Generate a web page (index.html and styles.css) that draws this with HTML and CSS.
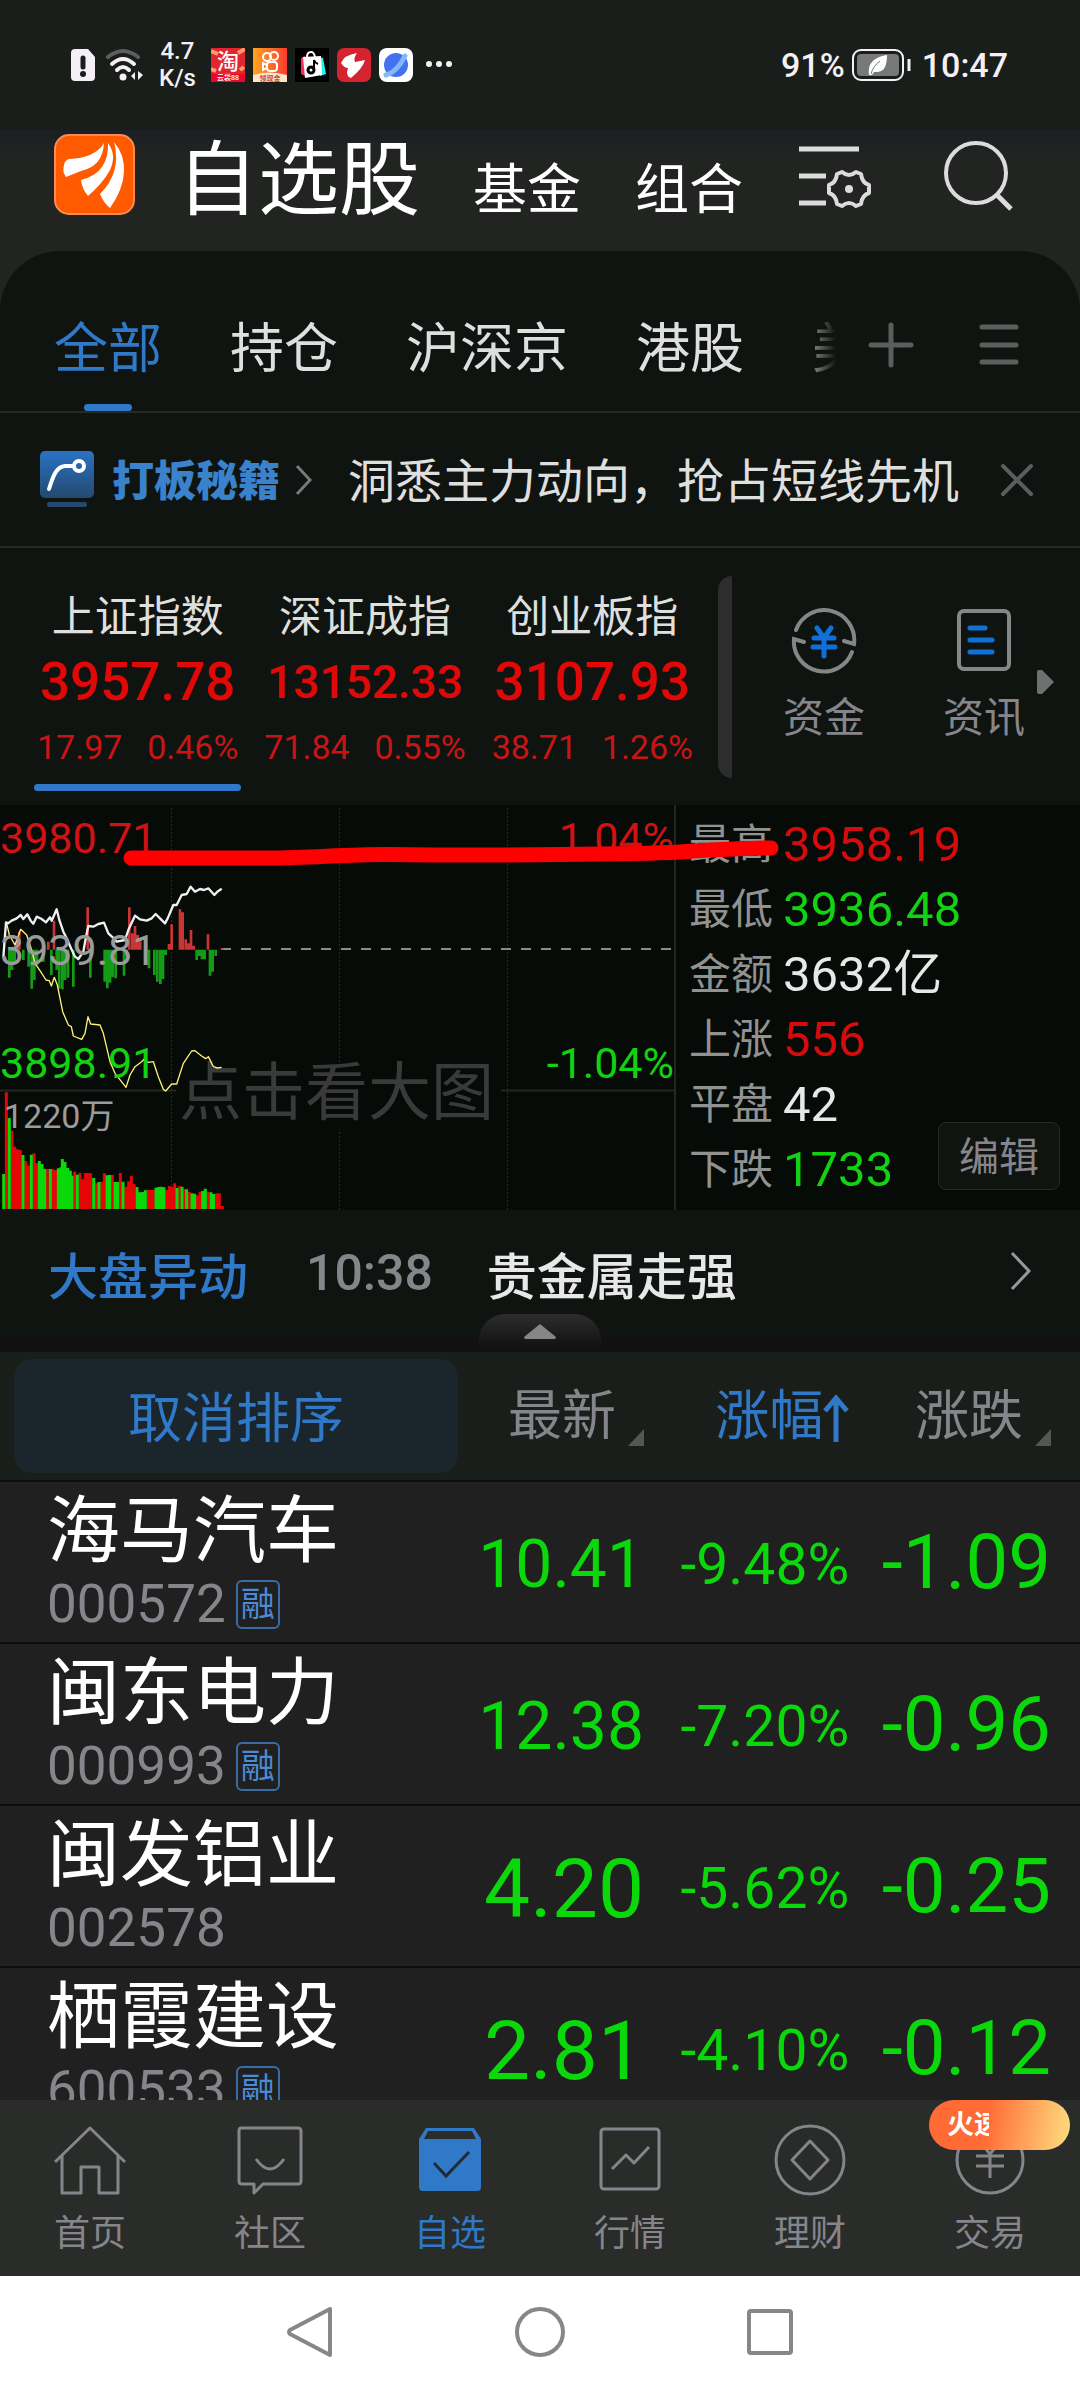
FILE: index.html
```html
<!DOCTYPE html>
<html lang="zh-CN">
<head>
<meta charset="utf-8">
<meta name="viewport" content="width=device-width, initial-scale=1">
<title>自选股</title>
<link rel="stylesheet" href="styles.css">
</head>
<body>
<div class="app">
  <div class="status">
    <svg class="status-sim" width="26" height="34" viewBox="0 0 26 34"><path d="M5 1h13l7 8v20a4 4 0 0 1-4 4H5a4 4 0 0 1-4-4V5a4 4 0 0 1 4-4z" fill="#f4f0f5"/><path d="M13 10v9" stroke="#1a1e1b" stroke-width="5" stroke-linecap="round"/><circle cx="13" cy="26" r="3" fill="#1a1e1b"/></svg>
    <svg class="status-wifi" width="38" height="34" viewBox="0 0 38 34" fill="none" stroke-width="4" stroke-linecap="round"><path d="M3 9q15-12 30 0" stroke="#5c5e5c"/><path d="M7 16q11-10 22 0M12 22q6-6 12 0" stroke="#f4f0f5"/><circle cx="18" cy="29" r="3.500" fill="#f4f0f5"/><path d="M26 28l4-4v8zM38 27l-5-4v9z" fill="#f4f0f5"/></svg>
    <div class="status-speed"><span>4.7</span><span>K/s</span></div>
    <div class="status-apps">
      <svg width="34" height="34" viewBox="0 0 34 34"><rect width="34" height="34" fill="#e2262f"/><path d="M0 3l7 3M27 5l7-4M0 21l5 2M29 22l4-3" stroke="#ff9c6a" stroke-width="4"/><rect y="26" width="34" height="8" fill="#e8082c"/><text x="17" y="21" font-size="22" text-anchor="middle" fill="#fff">淘</text><text x="17" y="32" font-size="7" text-anchor="middle" fill="#fff">云袋88</text></svg>
      <svg width="34" height="34" viewBox="0 0 34 34"><defs><linearGradient id="ks" x1="0" x2="1"><stop stop-color="#ffa51f"/><stop offset="1" stop-color="#fb3b2e"/></linearGradient></defs><rect width="34" height="34" fill="url(#ks)"/><path d="M0 27q17-5 34 0v7H0z" fill="#ffe6c4"/><g fill="none" stroke="#fff" stroke-width="2"><circle cx="14" cy="9" r="4"/><circle cx="21" cy="8" r="4"/><rect x="14" y="14" width="10" height="9" rx="3"/><path d="M14 17l-4-2v7l4-2"/></g><text x="17" y="33" font-size="7" text-anchor="middle" fill="#b5261c">领现金</text></svg>
      <svg width="34" height="34" viewBox="0 0 34 34"><rect width="34" height="34" fill="#000"/><path d="M6 10l4-2v20l-4-2z" fill="#fe2c55"/><path d="M24 9l4 1 3 16-6 2z" fill="#25f4ee"/><path d="M12 9q0-5 4-5 3 0 4 5" fill="none" stroke="#fff" stroke-width="2"/><path d="M8 9l18-1 1 19-17 3z" fill="#fff"/><circle cx="16" cy="22" r="3" fill="none" stroke="#000" stroke-width="3"/><path d="M19 22V12q1 3 4 4" fill="none" stroke="#000" stroke-width="2"/></svg>
      <svg width="34" height="34" viewBox="0 0 34 34"><rect width="34" height="34" rx="7" fill="#d5232f"/><path d="M20 5q-4 6-2 9l10-2q-2 8-14 18-4-1-4-6l1-4q-4 0-7-5 3-8 16-10z" fill="#fff"/></svg>
      <svg width="34" height="34" viewBox="0 0 34 34"><rect width="34" height="34" rx="8" fill="#fff"/><circle cx="17" cy="17" r="12" fill="#4671ee"/><path d="M7 27q11-3 19-19" fill="none" stroke="#82b9fb" stroke-width="5" stroke-linecap="round"/></svg>
      <svg class="status-dots" width="28" height="34" viewBox="0 0 28 34" fill="#f4f0f5"><circle cx="8" cy="16" r="3"/><circle cx="18" cy="16" r="3"/><circle cx="28" cy="16" r="3"/></svg>
    </div>
    <span class="status-pct">91%</span>
    <svg class="status-bat" width="62" height="34" viewBox="0 0 62 34"><rect x="2" y="2" width="50" height="30" rx="8" fill="none" stroke="#f4f0f5" stroke-width="2"/><rect x="6" y="6" width="42" height="22" rx="4" fill="#777a78"/><path d="M18 27c-1-10 2-17 18-20 0 12-3 18-13 17l-2 3z" fill="#fff"/><path d="M20 26q2-8 9-13" stroke="#777a78" stroke-width="1" fill="none"/><path d="M58 11v12" stroke="#f4f0f5" stroke-width="3"/></svg>
    <time class="status-time">10:47</time>
  </div>

  <header class="header">
    <svg class="logo" width="81" height="81" viewBox="0 0 81 81"><rect x="1" y="1" width="79" height="79" rx="14" fill="#ff5a00" stroke="#ff8a50" stroke-width="2"/><path d="M10 31q1-5 5-6 26-1 35-16-1 23-23 28l-15 6q-4-5-2-12z" fill="#fff"/><path d="M54 9q9 12 2 27-7 13-22 26-6-7-7-16 28-7 27-37z" fill="#fff"/><path d="M60 8q11 13 10 30-1 18-14 36-7-6-10-14 22-22 14-52z" fill="#fff"/></svg>
    <h1 class="title">自选股</h1>
    <a class="subtitle" href="#">基金</a>
    <a class="subtitle" href="#">组合</a>
    <button class="icon-btn filter-btn" aria-label="筛选设置"><svg width="74" height="66" viewBox="0 0 74 66" fill="none" stroke="#dcdcdc" stroke-width="5"><path d="M2 4h60M2 31h27M2 58h27"/><path d="M45 27q7 6 14 0l5 2q1 9 8 11v8q-7 2-8 11l-5 2q-7-6-14 0l-5-2q-1-9-8-11v-8q7-2 8-11z" stroke-width="4" stroke-linejoin="round"/><circle cx="52" cy="44" r="4" fill="#dcdcdc" stroke="none"/></svg></button>
    <button class="icon-btn search-btn" aria-label="搜索"><svg width="72" height="70" viewBox="0 0 72 70" fill="none" stroke="#dcdcdc" stroke-width="4"><circle cx="34" cy="32" r="30"/><path d="M55 54l14 14" stroke-width="5"/></svg></button>
  </header>

  <main class="panel">
    <nav class="tabs">
      <div class="tabs-list">
        <a class="tab tab-active" href="#">全部</a>
        <a class="tab" href="#">持仓</a>
        <a class="tab" href="#">沪深京</a>
        <a class="tab" href="#">港股</a>
        <a class="tab" href="#">美股</a>
      </div>
      <button class="icon-btn" aria-label="添加分组"><svg width="46" height="46" viewBox="0 0 46 46" stroke="#5c5e5d" stroke-width="5" stroke-linecap="round"><path d="M3 23h40M23 3v40"/></svg></button>
      <button class="icon-btn" aria-label="管理分组"><svg width="42" height="46" viewBox="0 0 42 46" stroke="#5c5e5d" stroke-width="5" stroke-linecap="round"><path d="M4 5h34M4 23h34M4 40h34"/></svg></button>
    </nav>

    <section class="promo">
      <svg width="54" height="58" viewBox="0 0 54 58"><defs><linearGradient id="pg" x1="0" x2="0" y1="0" y2="1"><stop stop-color="#2b72c4"/><stop offset="1" stop-color="#24496f"/></linearGradient></defs><rect width="54" height="47" rx="5" fill="url(#pg)"/><path d="M9 38c5-16 8-22 16-23h9" fill="none" stroke="#fff" stroke-width="4" stroke-linecap="round"/><circle cx="39" cy="15" r="5" fill="none" stroke="#fff" stroke-width="4"/><rect x="7" y="51" width="40" height="5" rx="2" fill="#24496f"/></svg>
      <a class="promo-name" href="#">打板秘籍</a>
      <svg width="20" height="32" viewBox="0 0 20 32" fill="none" stroke="#77797a" stroke-width="3"><path d="M3 2l13 14L3 30"/></svg>
      <span class="promo-text">洞悉主力动向，抢占短线先机</span>
      <button class="icon-btn promo-close" aria-label="关闭"><svg width="34" height="34" viewBox="0 0 34 34" stroke="#5c5e5d" stroke-width="4" stroke-linecap="round"><path d="M3 3l28 28M31 3L3 31"/></svg></button>
    </section>

    <section class="indices">
      <div class="index-list">
        <a class="index index-active" href="#"><span class="index-name">上证指数</span><span class="index-value">3957.78</span><span class="index-delta"><span>17.97</span><span>0.46%</span></span></a>
        <a class="index" href="#"><span class="index-name">深证成指</span><span class="index-value index-value-long">13152.33</span><span class="index-delta"><span>71.84</span><span>0.55%</span></span></a>
        <a class="index" href="#"><span class="index-name">创业板指</span><span class="index-value">3107.93</span><span class="index-delta"><span>38.71</span><span>1.26%</span></span></a>
      </div>
      <div class="index-divider"></div>
      <div class="shortcuts">
        <a class="shortcut" href="#"><svg width="66" height="68" viewBox="0 0 66 68" fill="none"><g stroke="#868686" stroke-width="4" stroke-linecap="round"><path d="M5 24A30 30 0 0 1 63 38l-10-3M61 46A30 30 0 0 1 3 33l10 3"/></g><path d="M26 22l7 10 7-10M23 32h20M22 41h22M33 32v18" stroke="#1070d8" stroke-width="5" stroke-linecap="round"/></svg>资金</a>
        <a class="shortcut" href="#"><svg width="54" height="68" viewBox="0 0 54 68" fill="none"><rect x="2" y="5" width="50" height="58" rx="5" stroke="#868686" stroke-width="4"/><path d="M13 22h15M13 34h22M13 46h22" stroke="#1070d8" stroke-width="5" stroke-linecap="round"/></svg>资讯</a>
      </div>
      <svg class="more-arrow" width="17" height="26" viewBox="0 0 17 26"><path d="M2 1h3l12 12L5 25H2q-2 0-2-2V3q0-2 2-2z" fill="#6f706f"/></svg>
    </section>

    <section class="quote">
      <svg class="chart" viewBox="0 0 674 405" role="img" aria-label="上证指数分时图">
        <g stroke="#262a27" stroke-width="1" stroke-dasharray="2 2"><path d="M171.500 3v402M339.500 3v402M507.500 3v402"/></g>
        <path d="M0 285.500h176M501 285.500h173" stroke="#232624" stroke-width="2"/>
        <path d="M221 144h453" stroke="#8c8c8c" stroke-width="2" stroke-dasharray="10 10"/>
        <rect x="176" y="258" width="325" height="66" fill="#060b07"/>
        <text class="chart-hint" x="179" y="309">点击看大图</text>
        <svg width="674" height="405" viewBox="0 -225 2022 1215" fill="none">
          <path stroke="#c93434" stroke-width="8" d="M50 209v-24M58 209v-54M145 209v-24M162 209v-87M263 209V82M388 209V82M397 209v-49M405 209v-71M413 209v-44M421 209v-30M507 209v-17M515 209v-76M540 209V88M548 209V97M557 209v-31M565 209v-19M573 209v-59M581 209v-12M624 209v-46M666 209v-4"/>
          <path stroke="#159c17" stroke-width="8" d="M28 209v84M36 209v61M44 209v41M70 209v31M86 209v51M95 209v117M103 209v91M111 209v46M130 209v36M154 209v76M170 209v61M178 209v117M187 209v119M195 209v91M204 209v84M220 209v111M271 209v84M314 209v96M322 209v116M330 209v99M338 209v83M347 209v86M372 209v78M380 209v20M447 209v56M463 209v76M472 209v96M481 209v103M489 209v88M497 209v16M590 209v31M598 209v19M606 209v29M614 209v29M630 209v78M638 209v66M647 209v19"/>
          <path stroke="#fff07a" stroke-width="4" stroke-linejoin="round" d="M20 130L28 165 45 195 62 148 80 165 95 210 105 250 120 272 138 300 148 302 154 318 163 292 172 315 188 395 205 435 214 440 220 468 245 478 255 460 264 410 272 432 300 435 310 460 330 545 345 580 378 622 390 585 405 560 425 545 432 538 445 547 460 545 475 590 490 628 497 633 515 612 530 612 550 550 575 513 585 512 605 528 617 536 625 530 640 560 652 564 665 562"/>
          <path stroke="#f0f0f0" stroke-width="7" stroke-linejoin="round" d="M10 232L18 127 24 130 35 122 50 115 62 105 70 117 82 103 92 122 100 131 110 110 125 117 138 127 150 112 155 122 170 88 178 120 190 155 200 175 213 205 225 230 235 237 250 215 258 170 265 138 280 140 295 132 312 128 325 160 338 172 350 185 375 180 385 150 405 107 420 118 440 122 455 115 467 102 480 115 495 130 503 115 520 75 530 75 545 45 560 42 572 20 585 35 600 27 612 30 625 25 643 45 652 35 665 26"/>
          <path stroke="#e60505" stroke-width="9" d="M19 987V637M36 987V752M44 987V800M52 987V808M61 987V810M77 987V843M85 987V857M102 987V820M110 987V850M142 987V867M159 987V868M167 987V870M224 987V875M240 987V879M248 987V897M256 987V879M264 987V879M272 987V880M289 987V910M305 987V905M313 987V880M337 987V885M361 987V879M377 987V920M386 987V904M394 987V887M402 987V912M444 987V929M452 987V930M460 987V929M500 987V930M508 987V918M516 987V920M524 987V910M538 987V918M554 987V927M568 987V936M592 987V946M600 987V935M624 987V935M650 987V940M658 987V940M667 987V978"/>
          <path stroke="#0ad80a" stroke-width="9" d="M11 987V882M28 987V714M69 987V825M94 987V824M118 987V843M126 987V852M134 987V867M151 987V867M175 987V865M183 987V862M187 987V837M195 987V846M203 987V864M211 987V872M216 987V887M232 987V884M281 987V894M297 987V906M321 987V886M329 987V885M345 987V906M353 987V906M369 987V905M411 987V921M419 987V937M427 987V936M436 987V931M468 987V923M476 987V921M484 987V920M492 987V922M531 987V924M546 987V920M560 987V928M576 987V940M584 987V941M608 987V933M616 987V926M633 987V937M641 987V942"/>
        </svg>
        <text class="axis axis-up" x="0" y="48">3980.71</text>
        <text class="axis axis-mid" x="0" y="160">3939.81</text>
        <text class="axis axis-down" x="0" y="273">3898.91</text>
        <text class="axis axis-up" x="674" y="48" text-anchor="end">1.04%</text>
        <text class="axis axis-down" x="674" y="273" text-anchor="end">-1.04%</text>
        <text class="axis-vol" x="4" y="323">1220万</text>
      </svg>
      <dl class="stats">
        <dt>最高</dt><dd class="up">3958.19</dd>
        <dt>最低</dt><dd class="down">3936.48</dd>
        <dt>金额</dt><dd>3632亿</dd>
        <dt>上涨</dt><dd class="up">556</dd>
        <dt>平盘</dt><dd>42</dd>
        <dt>下跌</dt><dd class="down">1733</dd>
      </dl>
      <button class="edit">编辑</button>
      <svg class="marker" viewBox="0 0 1080 405" fill="none" stroke="#f00" stroke-width="15" stroke-linecap="round" stroke-linejoin="round"><path d="M131 53H270C310 53 350 49 390 49.500C500 51 640 49 680 47C710 45 740 43 771 43"/></svg>
    </section>

    <section class="news">
      <a class="news-tag" href="#">大盘异动</a>
      <time class="news-time">10:38</time>
      <span class="news-text">贵金属走强</span>
      <svg class="news-chev" width="22" height="40" viewBox="0 0 22 40" fill="none" stroke="#97979c" stroke-width="3"><path d="M2 2l17 18L2 38"/></svg>
      <button class="collapse" aria-label="收起"><svg width="32" height="15" viewBox="0 0 32 15"><path d="M16 0l16 13-1 2H1l-1-2z" fill="#858685"/></svg></button>
    </section>

    <section class="list">
      <table class="stocks">
        <colgroup><col class="c-name"><col class="c-price"><col class="c-pct"><col class="c-diff"></colgroup>
        <thead>
          <tr>
            <th><button class="cancel-sort">取消排序</button></th>
            <th><button class="sort">最新<svg width="16" height="17" viewBox="0 0 16 17"><path d="M16 0v17H0z" fill="#555755"/></svg></button></th>
            <th><button class="sort sort-active">涨幅<svg class="sort-arrow" width="26" height="48" viewBox="0 0 26 48"><path d="M13 4v44M2 17L13 4l11 13" fill="none" stroke="#3078c8" stroke-width="5"/></svg></button></th>
            <th><button class="sort">涨跌<svg width="16" height="17" viewBox="0 0 16 17"><path d="M16 0v17H0z" fill="#555755"/></svg></button></th>
          </tr>
        </thead>
        <tbody>
          <tr><td><span class="name">海马汽车</span><span class="code">000572<i class="margin">融</i></span></td><td class="price price-long">10.41</td><td class="pct">-9.48%</td><td class="diff">-1.09</td></tr>
          <tr><td><span class="name">闽东电力</span><span class="code">000993<i class="margin">融</i></span></td><td class="price price-long">12.38</td><td class="pct">-7.20%</td><td class="diff">-0.96</td></tr>
          <tr><td><span class="name">闽发铝业</span><span class="code">002578</span></td><td class="price">4.20</td><td class="pct">-5.62%</td><td class="diff">-0.25</td></tr>
          <tr><td><span class="name">栖霞建设</span><span class="code">600533<i class="margin">融</i></span></td><td class="price">2.81</td><td class="pct">-4.10%</td><td class="diff">-0.12</td></tr>
        </tbody>
      </table>
    </section>
  </main>

  <nav class="tabbar">
    <a href="#"><svg width="72" height="76" viewBox="0 0 72 76" fill="none" stroke="#85858b" stroke-width="3"><path d="M1 40L36 6l35 34M8 34v37h19V45h18v26h19V34" stroke-linejoin="round"/></svg>首页</a>
    <a href="#"><svg width="72" height="76" viewBox="0 0 72 76" fill="none" stroke="#85858b" stroke-width="3" stroke-linejoin="round"><path d="M7 6h57q3 0 3 3v50q0 3-3 3H29L20 71v-9H8q-3 0-3-3V9q0-3 2-3z"/><path d="M22 37q14 20 28 0"/></svg>社区</a>
    <a class="tabbar-active" href="#"><svg width="72" height="76" viewBox="0 0 72 76"><path d="M12 6h48l7 11v48q0 4-4 4H9q-4 0-4-4V17z" fill="#3078c8"/><path d="M14 9h44l4 8H10z" fill="#292c29"/><path d="M20 41l12 13 23-24" fill="none" stroke="#222b33" stroke-width="3"/></svg>自选</a>
    <a href="#"><svg width="72" height="76" viewBox="0 0 72 76" fill="none" stroke="#85858b" stroke-width="3" stroke-linejoin="round"><rect x="7" y="7" width="58" height="60" rx="3"/><path d="M18 47l14-14 8 8 15-16"/></svg>行情</a>
    <a href="#"><svg width="72" height="76" viewBox="0 0 72 76" fill="none" stroke="#85858b" stroke-width="3" stroke-linejoin="round"><circle cx="36" cy="38" r="34"/><path d="M36 19l18 19-18 19-18-19z"/></svg>理财</a>
    <a href="#"><svg width="72" height="76" viewBox="0 0 72 76" fill="none" stroke="#85858b" stroke-width="3"><circle cx="36" cy="38" r="33"/><path d="M26 20l10 12 10-12M22 34h28M22 44h28M36 32v24"/></svg>交易<span class="hot"><span>火速</span></span></a>
  </nav>

  <div class="sysnav">
    <button class="icon-btn" aria-label="返回"><svg width="46" height="50" viewBox="0 0 46 50" fill="none" stroke="#868886" stroke-width="4" stroke-linejoin="round"><path d="M43 2v46L3 27q-2-2 0-4z"/></svg></button>
    <button class="icon-btn" aria-label="主屏幕"><svg width="50" height="50" viewBox="0 0 50 50" fill="none" stroke="#868886" stroke-width="4"><circle cx="25" cy="25" r="23"/></svg></button>
    <button class="icon-btn" aria-label="最近任务"><svg width="46" height="50" viewBox="0 0 46 50" fill="none" stroke="#868886" stroke-width="4"><rect x="2" y="4" width="42" height="42" rx="2"/></svg></button>
  </div>
</div>
</body>
</html>
```
FILE: styles.css
```css
* { box-sizing: border-box; }
body {
  margin: 0;
  background: #1a1e1b;
  color: #dfdfdf;
  font-family: Roboto, "Noto Sans CJK SC", sans-serif;
}
svg { display: block; flex: none; }
a { color: inherit; text-decoration: none; }
button {
  padding: 0;
  border: 0;
  background: none;
  color: inherit;
  font: inherit;
  cursor: pointer;
}
.up { color: #d60b0b; }
.down { color: #12d212; }

.app {
  display: flex;
  flex-direction: column;
  height: 100vh;
  overflow: hidden;
}

/* System status bar */
.status {
  display: flex;
  align-items: center;
  height: 130px;
  padding: 0 72px 0 70px;
  color: #f4f0f5;
  font-weight: 500;
  font-size: 34px;
}
.status-wifi { margin-left: 9px; }
.status-speed {
  display: flex;
  flex-direction: column;
  align-items: center;
  margin-left: 16px;
  font-size: 24px;
  line-height: 27px;
}
.status-apps {
  display: flex;
  gap: 8px;
  margin: 0 auto 0 15px;
}
.status-dots { overflow: visible; }
.status-bat { margin: 0 9px 0 6px; }

/* App header */
.header {
  display: flex;
  align-items: flex-end;
  height: 121px;
  padding: 0 66px 30px 54px;
  background: linear-gradient(#1c1f24, #212421 24px);
  color: #fff;
  line-height: 60px;
}
.logo { margin-bottom: 6px; }
.title {
  margin: 0 53px 0 42px;
  font-weight: 400;
  font-size: 81px;
  line-height: 81px;
}
.subtitle { margin-right: 54px; font-size: 54px; }
.filter-btn { margin: 0 auto 10px 0; }
.search-btn { margin-bottom: 10px; }

.panel {
  display: flex;
  flex: 1;
  flex-direction: column;
  min-height: 0;
  background: linear-gradient(#212421 80px, #0f1410 80px);
}

/* Group tabs */
.tabs {
  display: flex;
  align-items: center;
  gap: 64px;
  height: 162px;
  padding-right: 60px;
  border-bottom: 2px solid #262a27;
  border-radius: 60px 60px 0 0;
  background: #0f1410;
}
.tabs-list {
  display: flex;
  flex: 1;
  gap: 68px;
  height: 100%;
  margin-right: -32px;
  padding-left: 54px;
  overflow: hidden;
  font-size: 54px;
  line-height: 198px;
  white-space: nowrap;
  mask-image: linear-gradient(90deg, #000 95%, transparent);
}
.tab { flex: none; }
.tab-active {
  display: flex;
  flex-direction: column;
  align-items: center;
  color: #3078c8;
}
.tab-active::after {
  width: 48px;
  height: 8px;
  margin-top: -45px;
  border-radius: 4px;
  background: #3078c8;
  content: "";
}
.tabs .icon-btn { margin-top: 28px; }

/* Promotion */
.promo {
  display: flex;
  align-items: center;
  height: 135px;
  padding: 0 46px 0 40px;
  border-bottom: 2px solid #262a27;
}
.promo-name, .promo-text { padding-bottom: 4px; }
.promo-name {
  margin: 0 14px 0 18px;
  color: #3a82cc;
  font-weight: 900;
  font-size: 42px;
}
.promo-text { margin-left: 34px; font-size: 47px; }
.promo-close { margin-left: auto; }

/* Indices */
.indices {
  display: flex;
  align-items: center;
  height: 257px;
  padding: 0 26px 0 24px;
}
.index-list { display: flex; flex: 682; align-self: stretch; }
.index {
  display: flex;
  flex: 1;
  flex-direction: column;
  align-items: center;
  padding: 42px 10px 0;
  color: #e10808;
}
.index-name { color: #dfdfdf; font-size: 43px; line-height: 54px; }
.index-value { font-weight: 500; font-size: 53px; line-height: 76px; }
.index-value-long { font-size: 46px; }
.index-delta {
  display: flex;
  align-self: stretch;
  justify-content: space-between;
  padding: 0 3px;
  color: #c81414;
  font-size: 34px;
  line-height: 54px;
}
.index-active::after {
  align-self: stretch;
  height: 7px;
  margin-top: 10px;
  border-radius: 4px;
  background: #3078c8;
  content: "";
}
.index-divider {
  width: 14px;
  height: 202px;
  margin: 0 12px;
  border-radius: 14px 0 0 14px;
  background: #2c2d2c;
}
.shortcuts { display: flex; flex: 320; }
.shortcut {
  display: flex;
  flex: 1;
  flex-direction: column;
  align-items: center;
  gap: 14px;
  color: #85858b;
  font-size: 41px;
  line-height: 60px;
}
.more-arrow { margin: 10px 0 0 -27px; }

/* Intraday chart and figures */
.quote {
  display: grid;
  position: relative;
  grid-template-columns: 674fr 406fr;
  background: #060b07;
}
.chart { width: 100%; }
.chart-hint { fill: #3a3a3a; font-size: 63px; }
.axis { font-size: 43px; }
.axis-up { fill: #d01212; }
.axis-mid { fill: #9b9b9b; }
.axis-down { fill: #12d212; }
.axis-vol { fill: #9b9b9b; font-size: 34px; }
.stats {
  display: grid;
  grid-template-columns: auto 1fr;
  grid-auto-rows: 65px;
  column-gap: 10px;
  align-content: start;
  margin: 0;
  padding: 7px 0 0 13px;
  border-left: 2px solid #232624;
  line-height: 65px;
}
.stats dt { color: #929292; font-size: 42px; }
.stats dd { margin: 0; font-size: 49px; }
.stats dd:not([class]) { color: #e8e8e8; }
.edit {
  position: absolute;
  right: 20px;
  bottom: 20px;
  width: 122px;
  height: 68px;
  padding-top: 4px;
  border: 1px solid #262a27;
  border-radius: 8px;
  background: #0f1410;
  color: #85858b;
  font-size: 40px;
  line-height: 60px;
}
.marker {
  position: absolute;
  inset: 0;
  width: 100%;
  pointer-events: none;
}

/* Market news */
.news {
  display: flex;
  position: relative;
  align-items: center;
  height: 142px;
  padding: 0 48px 2px;
  border-bottom: 14px solid #101110;
  font-weight: 500;
  font-size: 50px;
}
.news-tag { color: #3078c8; }
.news-time { margin: 0 54px 0 58px; color: #85858b; }
.news-text { color: #e8e8e8; }
.news-chev { margin: 0 0 4px auto; }
.collapse {
  display: flex;
  position: absolute;
  bottom: -10px;
  left: 50%;
  align-items: center;
  justify-content: center;
  width: 122px;
  height: 34px;
  margin-left: -61px;
  border-radius: 26px 26px 0 0;
  background: linear-gradient(#2c2d2c, #101110);
}

/* Stock table */
.list { flex: 1; min-height: 0; overflow: hidden; background: #202020; }
.stocks {
  width: 100%;
  border-collapse: collapse;
  table-layout: fixed;
}
.c-name { width: 43%; }
.c-price { width: 17%; }
.c-pct { width: 19%; }
.c-diff { width: 21%; }
.stocks th, .stocks td { padding: 0 4px 0 0; text-align: right; font-weight: 400; }
.stocks th {
  height: 129px;
  border-bottom: 2px solid #0c0d0c;
  background: #1a1e1b;
  color: #85858b;
  font-size: 54px;
}
.cancel-sort {
  display: block;
  width: 444px;
  height: 114px;
  margin-left: 14px;
  padding-bottom: 4px;
  border-radius: 18px;
  background: #1a252c;
  color: #3078c8;
}
.sort { display: inline-flex; align-items: flex-end; gap: 12px; line-height: 62px; }
.sort svg { margin-bottom: 2px; }
.sort-active { gap: 0; color: #3078c8; }
.sort-active svg { margin-bottom: 6px; }
.stocks td {
  height: 162px;
  border-bottom: 2px solid #0c0d0c;
  color: #0ad80a;
  line-height: 90px;
}
.stocks td:first-child { padding-left: 47px; text-align: left; }
.stocks th:last-child, .stocks td:last-child { padding-right: 29px; }
.stocks .price, .stocks .pct { padding-top: 6px; }
.name { display: block; padding-top: 2px; color: #fff; font-size: 73px; line-height: 82px; }
.code {
  display: flex;
  align-items: center;
  gap: 10px;
  color: #85858b;
  font-size: 53px;
  line-height: 64px;
}
.margin {
  padding: 0 3px;
  border: 2px solid #3a6da6;
  border-radius: 6px;
  color: #4a8ad6;
  font-style: normal;
  font-size: 34px;
  line-height: 45px;
}
.price { font-size: 82px; }
.stocks .price-long { font-size: 66px; }
.pct { font-size: 57px; }
.diff { font-size: 76px; }

/* Bottom navigation */
.tabbar {
  display: flex;
  height: 176px;
  background: #292c29;
  color: #85858b;
  font-size: 36px;
  line-height: 48px;
}
.tabbar a {
  display: flex;
  position: relative;
  flex: 1;
  flex-direction: column;
  align-items: center;
  gap: 12px;
  padding-top: 22px;
}
.tabbar .tabbar-active { color: #3078c8; }
.hot {
  position: absolute;
  top: 0;
  right: 10px;
  width: 141px;
  height: 50px;
  padding-left: 18px;
  border-radius: 25px;
  background: linear-gradient(100deg, #ff6a35 40%, #ffdf80);
  color: #fff;
  font-weight: 700;
  font-size: 27px;
  line-height: 50px;
}
.hot span { display: block; width: 42px; overflow: hidden; white-space: nowrap; }

/* System navigation */
.sysnav {
  display: flex;
  align-items: center;
  justify-content: center;
  gap: 182px;
  height: 112px;
  background: #fff;
}
```
